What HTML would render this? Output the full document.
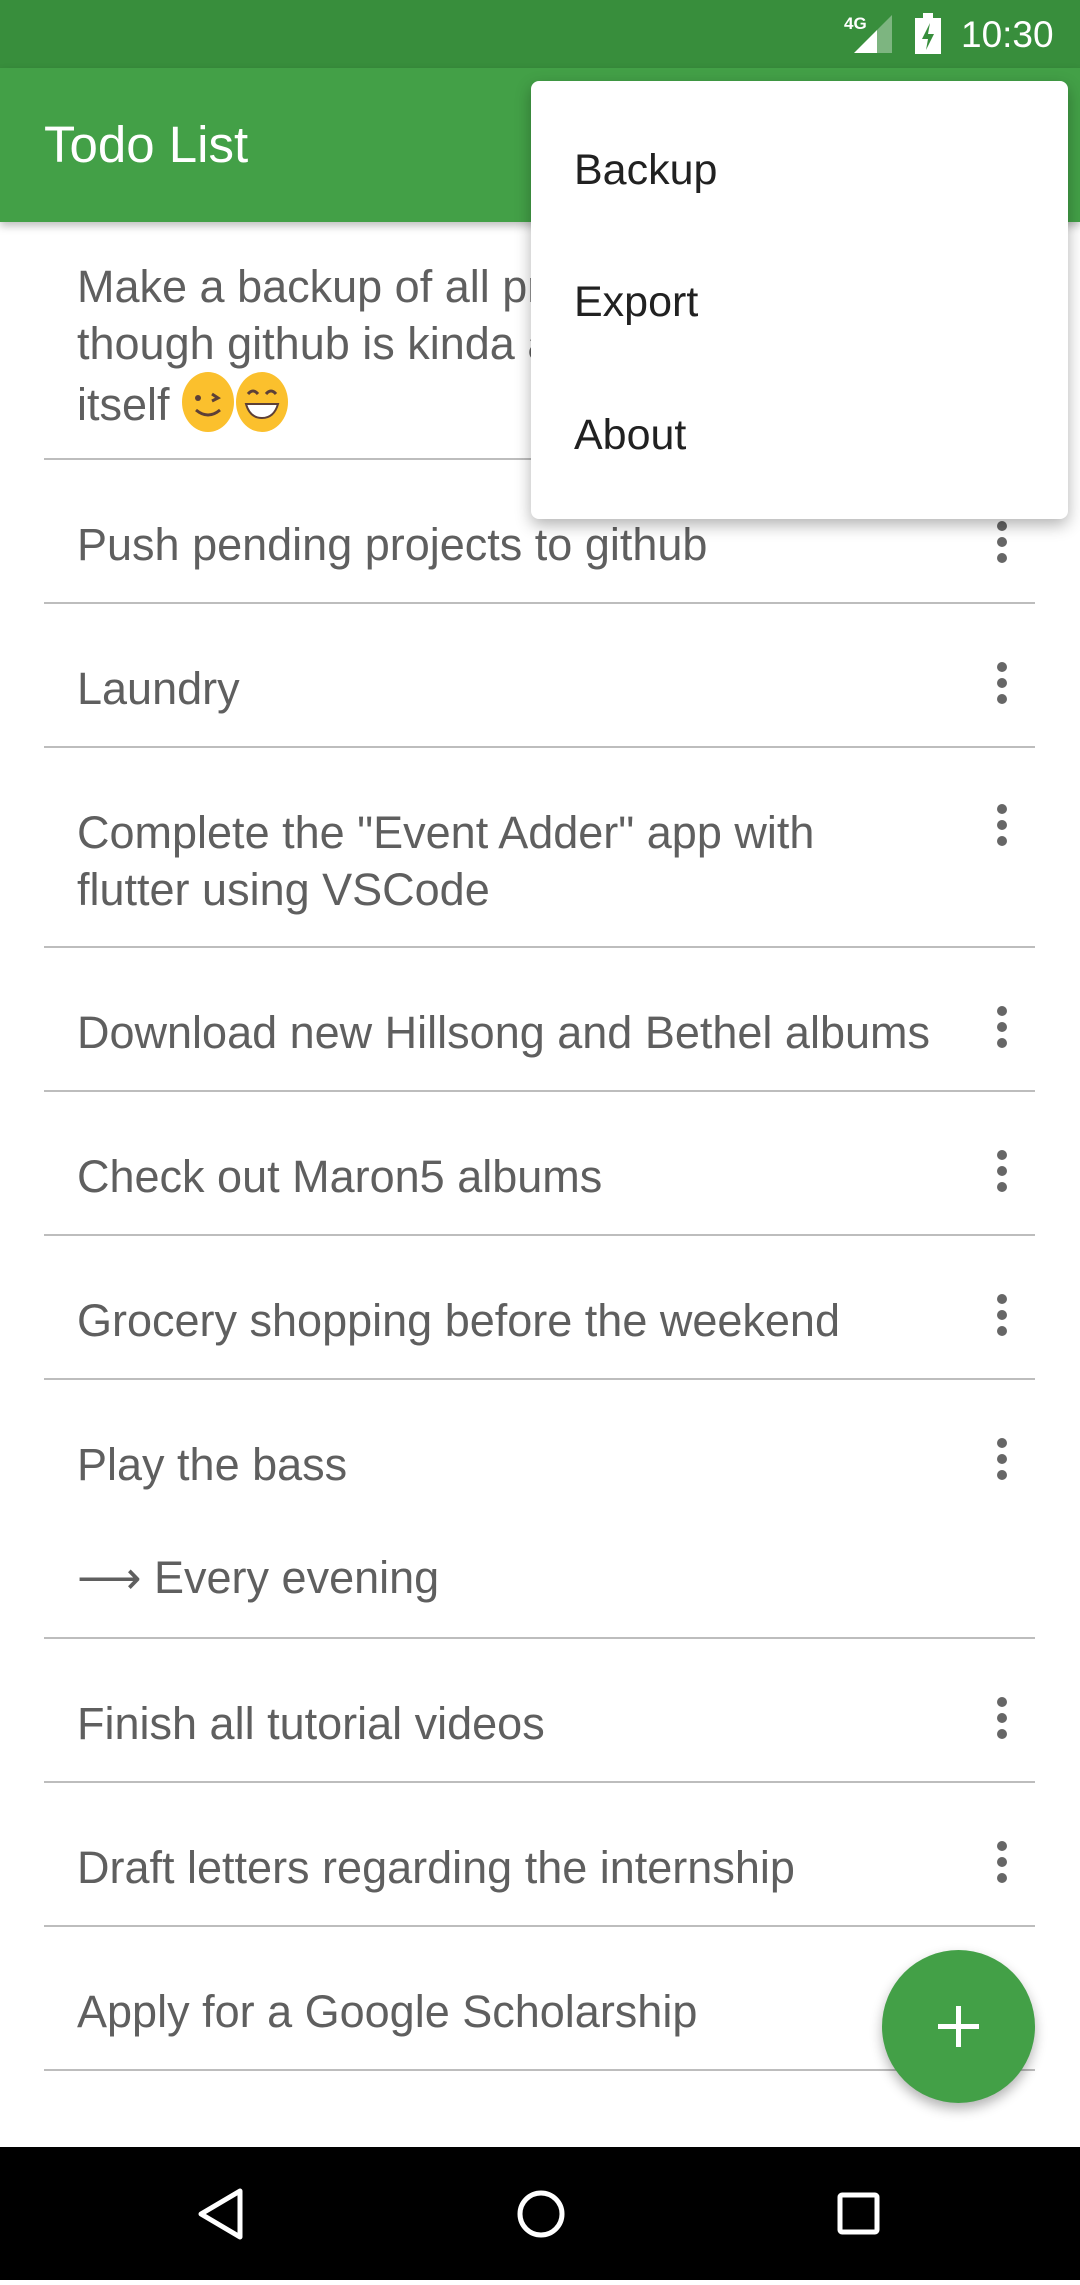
<!DOCTYPE html>
<html><head><meta charset="utf-8"><style>
*{margin:0;padding:0;box-sizing:border-box}
body{width:1080px;height:2280px;position:relative;overflow:hidden;background:#fff;font-family:"Liberation Sans",sans-serif}
.sb{position:absolute;left:0;top:0;width:1080px;height:68px;background:#388E3C}
.ab{position:absolute;left:0;top:68px;width:1080px;height:154px;background:#43A047;box-shadow:0 4px 8px rgba(0,0,0,.25)}
.title{position:absolute;left:44px;top:115px;color:#fff;font-size:51px;line-height:60px}
.t{position:absolute;left:77px;color:#5f5f5f;font-size:45px;line-height:57px;white-space:nowrap;margin-top:3px}
.d{position:absolute;left:44px;width:991px;height:2px;background:#bdbdbd}
.dots{position:absolute;left:997px;width:10px;margin-top:3px}
.dots i{display:block;width:10px;height:10px;border-radius:50%;background:#666;margin-bottom:6px}
.menu{position:absolute;left:531px;top:81px;width:537px;height:438px;background:#fff;border-radius:8px;box-shadow:0 6px 16px rgba(0,0,0,.3)}
.menu div{position:absolute;left:43px;font-size:43px;color:#212121;line-height:50px}
.fab{position:absolute;left:882px;top:1950px;width:153px;height:153px;border-radius:50%;background:#43A047;box-shadow:0 6px 12px rgba(0,0,0,.3)}
.nav{position:absolute;left:0;top:2147px;width:1080px;height:133px;background:#000}
.emo{display:inline-block;width:52px;height:60px;border-radius:50%;background:#FBC02D;vertical-align:-12px;position:relative}
</style></head><body>
<div class="sb">
<div style="position:absolute;left:844px;top:14px;color:#fff;font-size:17px;font-weight:bold">4G</div>
<svg style="position:absolute;left:852px;top:14px" width="42" height="40"><polygon points="40,1 40,39 25,39 25,16" fill="rgba(255,255,255,.35)"/><polygon points="25,16 25,39 2,39" fill="#fff"/></svg>
<svg style="position:absolute;left:915px;top:13px" width="26" height="41"><path d="M8 0h10v5h8v36H0V5h8z" fill="#fff"/><path d="M15 10l-8 16h6l-2 11 8-16h-6z" fill="#388E3C"/></svg>
<div style="position:absolute;left:961px;top:14px;color:#fff;font-size:37px;line-height:42px">10:30</div>
</div>
<div class="ab"></div>
<div class="title">Todo List</div>

<div class="t" style="top:255px">Make a backup of all projects even<br>though github is kinda a backup<br>itself <span class="emo"><svg width="52" height="60" style="position:absolute;left:0;top:0"><circle cx="16" cy="26" r="3" fill="#5d4037"/><path d="M30 22l6 4-6 3M14 38q12 10 24 0" stroke="#5d4037" stroke-width="3" fill="none"/></svg></span><span class="emo" style="margin-left:2px"><svg width="52" height="60" style="position:absolute;left:0;top:0"><path d="M12 22q5-6 10 0M30 22q5-6 10 0" stroke="#5d4037" stroke-width="3" fill="none"/><path d="M10 32h32q-4 14-16 14t-16-14z" fill="#fff" stroke="#5d4037" stroke-width="2"/></svg></span></div>
<div class="d" style="top:458px"></div>
<div class="t" style="top:513px">Push pending projects to github</div>
<div class="dots" style="top:518px"><i></i><i></i><i></i></div>
<div class="d" style="top:602px"></div>
<div class="t" style="top:657px">Laundry</div>
<div class="dots" style="top:659px"><i></i><i></i><i></i></div>
<div class="d" style="top:746px"></div>
<div class="t" style="top:801px">Complete the "Event Adder" app with<br>flutter using VSCode</div>
<div class="dots" style="top:801px"><i></i><i></i><i></i></div>
<div class="d" style="top:946px"></div>
<div class="t" style="top:1001px">Download new Hillsong and Bethel albums</div>
<div class="dots" style="top:1003px"><i></i><i></i><i></i></div>
<div class="d" style="top:1090px"></div>
<div class="t" style="top:1145px">Check out Maron5 albums</div>
<div class="dots" style="top:1147px"><i></i><i></i><i></i></div>
<div class="d" style="top:1234px"></div>
<div class="t" style="top:1289px">Grocery shopping before the weekend</div>
<div class="dots" style="top:1291px"><i></i><i></i><i></i></div>
<div class="d" style="top:1378px"></div>
<div class="t" style="top:1433px">Play the bass</div>
<div class="dots" style="top:1435px"><i></i><i></i><i></i></div>
<div class="t" style="top:1546px">⟶ Every evening</div>
<div class="d" style="top:1637px"></div>
<div class="t" style="top:1692px">Finish all tutorial videos</div>
<div class="dots" style="top:1694px"><i></i><i></i><i></i></div>
<div class="d" style="top:1781px"></div>
<div class="t" style="top:1836px">Draft letters regarding the internship</div>
<div class="dots" style="top:1838px"><i></i><i></i><i></i></div>
<div class="d" style="top:1925px"></div>
<div class="t" style="top:1980px">Apply for a Google Scholarship</div>
<div class="d" style="top:2069px"></div>

<div class="fab"><svg width="153" height="153"><path d="M76.5 56v41M56 76.5h41" stroke="#fff" stroke-width="5"/></svg></div>

<div class="menu">
<div style="top:64px">Backup</div>
<div style="top:196px">Export</div>
<div style="top:329px">About</div>
</div>

<div class="nav">
<svg width="1080" height="133">
<path d="M240 44L201 67L240 90Z" fill="none" stroke="#fff" stroke-width="5" stroke-linejoin="round"/>
<circle cx="541" cy="67" r="21" fill="none" stroke="#fff" stroke-width="5"/>
<rect x="840" y="48" width="37" height="37" rx="2" fill="none" stroke="#fff" stroke-width="5"/>
</svg>
</div>
</body></html>
